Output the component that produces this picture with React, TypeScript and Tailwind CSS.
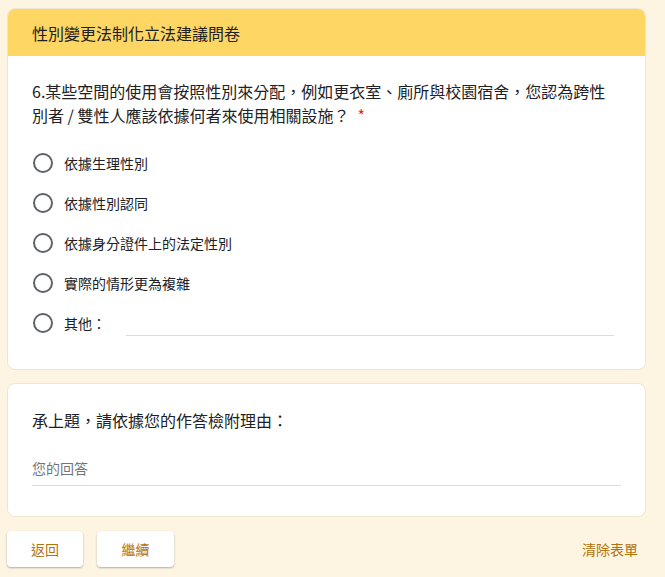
import React from "react";

const options = ["依據生理性別", "依據性別認同", "依據身分證件上的法定性別", "實際的情形更為複雜"];

function Radio() {
  return <span className="block h-[20px] w-[20px] shrink-0 rounded-full border-2 border-[#5f6368]" />;
}

export default function App() {
  return (
    <div
      className="min-h-[577px] w-[665px] bg-[#fdf5e1] pt-[8px] text-[#202124]"
      style={{ fontFamily: '"Noto Sans CJK TC", "Noto Sans", sans-serif' }}
    >
      <div className="ml-[7px] w-[639px]">
        <div className="overflow-hidden rounded-[8px] border border-[#efe6cf] bg-white">
          <div className="flex h-[47px] items-center bg-[#fdd663] px-[24px] text-[16px]">性別變更法制化立法建議問卷</div>
          <div className="px-[24px] pb-[26px] pt-[23px]">
            <div className="text-[16px] leading-[24px]">
              6.某些空間的使用會按照性別來分配，例如更衣室、廁所與校園宿舍，您認為跨性別者 / 雙性人應該依據何者來使用相關設施？
              <span className="ml-[8px] text-[#d93025]">*</span>
            </div>
            <div className="mt-[16px] flex flex-col">
              {options.map((o) => (
                <div key={o} className="flex h-[40px] items-center gap-[11px] pl-[1px] text-[14px]">
                  <Radio />
                  <span>{o}</span>
                </div>
              ))}
              <div className="flex h-[40px] items-center gap-[11px] pl-[1px] text-[14px]">
                <Radio />
                <span className="w-[51px]">其他：</span>
                <div className="mb-[7px] h-px w-[488px] self-end bg-[#dadce0]" />
              </div>
            </div>
          </div>
        </div>

        <div className="mt-[13px] rounded-[8px] border border-[#efe6cf] bg-white px-[24px] pb-[30px] pt-[24px]">
          <div className="text-[16px] leading-[24px]">承上題，請依據您的作答檢附理由：</div>
          <div className="mt-[26px] border-b border-[#dadce0] pb-[6px] text-[14px] text-[#70757a]">您的回答</div>
        </div>

        <div className="mt-[14px] flex items-center">
          <button className="h-[36px] w-[76px] rounded-[4px] bg-white text-[14px] text-[#b5720a] shadow-[0_1px_2px_rgba(0,0,0,0.3)]">返回</button>
          <button className="ml-[14px] h-[36px] w-[77px] rounded-[4px] bg-white text-[14px] text-[#b5720a] shadow-[0_1px_2px_rgba(0,0,0,0.3)]">繼續</button>
          <span className="ml-auto mr-[8px] text-[14px] text-[#b5720a]">清除表單</span>
        </div>
      </div>
    </div>
  );
}
